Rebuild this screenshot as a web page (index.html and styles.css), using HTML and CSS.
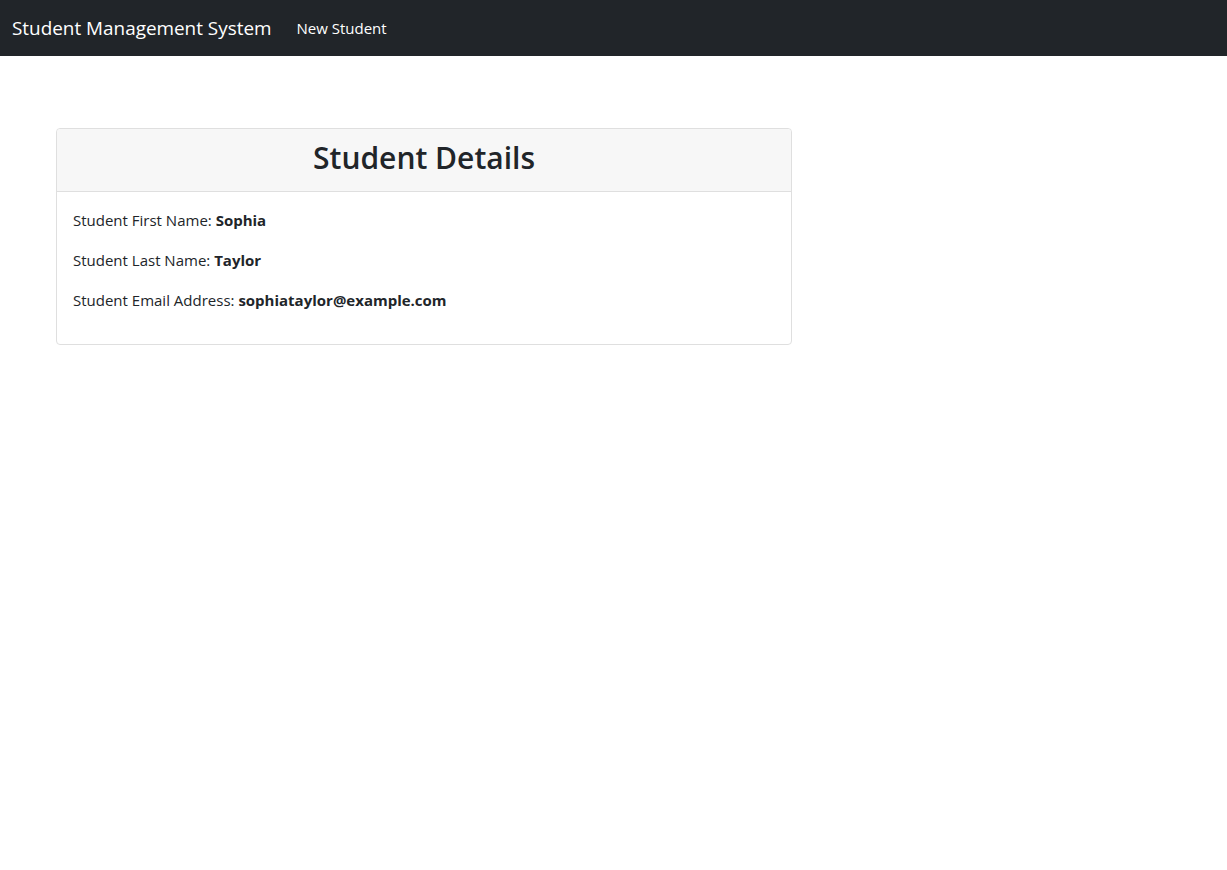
FILE: index.html
```html
<!DOCTYPE html>
<html lang="en">
<head>
<meta charset="utf-8">
<title>Student Management System</title>
<link rel="stylesheet" href="styles.css">
</head>
<body>
<nav class="navbar">
  <a class="brand" href="#">Student Management System</a>
  <a class="nav-link" href="#">New Student</a>
</nav>
<main class="container">
  <div class="card">
    <div class="card-header"><h2>Student Details</h2></div>
    <div class="card-body">
      <p>Student First Name: <b>Sophia</b></p>
      <p>Student Last Name: <b>Taylor</b></p>
      <p>Student Email Address: <b>sophiataylor@example.com</b></p>
    </div>
  </div>
</main>
</body>
</html>
```
FILE: styles.css
```css
* { box-sizing: border-box; }
body {
  margin: 0;
  font-family: "Open Sans", "Noto Sans", sans-serif;
  font-size: 15px;
  line-height: 24px;
  color: #212529;
  background: #fff;
}
.navbar {
  height: 56px;
  background: #212529;
  display: flex;
  align-items: center;
  padding: 0 12px;
}
.brand {
  color: #fff;
  text-decoration: none;
  font-size: 18.9px;
  margin-right: 25px;
}
.nav-link {
  color: #fff;
  text-decoration: none;
  font-size: 15px;
}
.container {
  padding: 72px 0 0 56px;
}
.card {
  width: 736px;
  border: 1px solid #dfdfdf;
  border-radius: 4px;
}
.card-header {
  height: 63px;
  background: #f7f7f7;
  border-bottom: 1px solid #dfdfdf;
  border-radius: 4px 4px 0 0;
  display: flex;
  align-items: center;
  justify-content: center;
}
.card-header h2 {
  margin: 0;
  font-size: 30px;
  font-weight: 600;
  line-height: 38px;
  padding-bottom: 5px;
}
.card-body {
  padding: 16px 16px 0;
}
.card-body p {
  margin: 0 0 16px;
}
.card-body b { font-weight: 700; }
.card-body p:last-child { margin-bottom: 32px; }
```
